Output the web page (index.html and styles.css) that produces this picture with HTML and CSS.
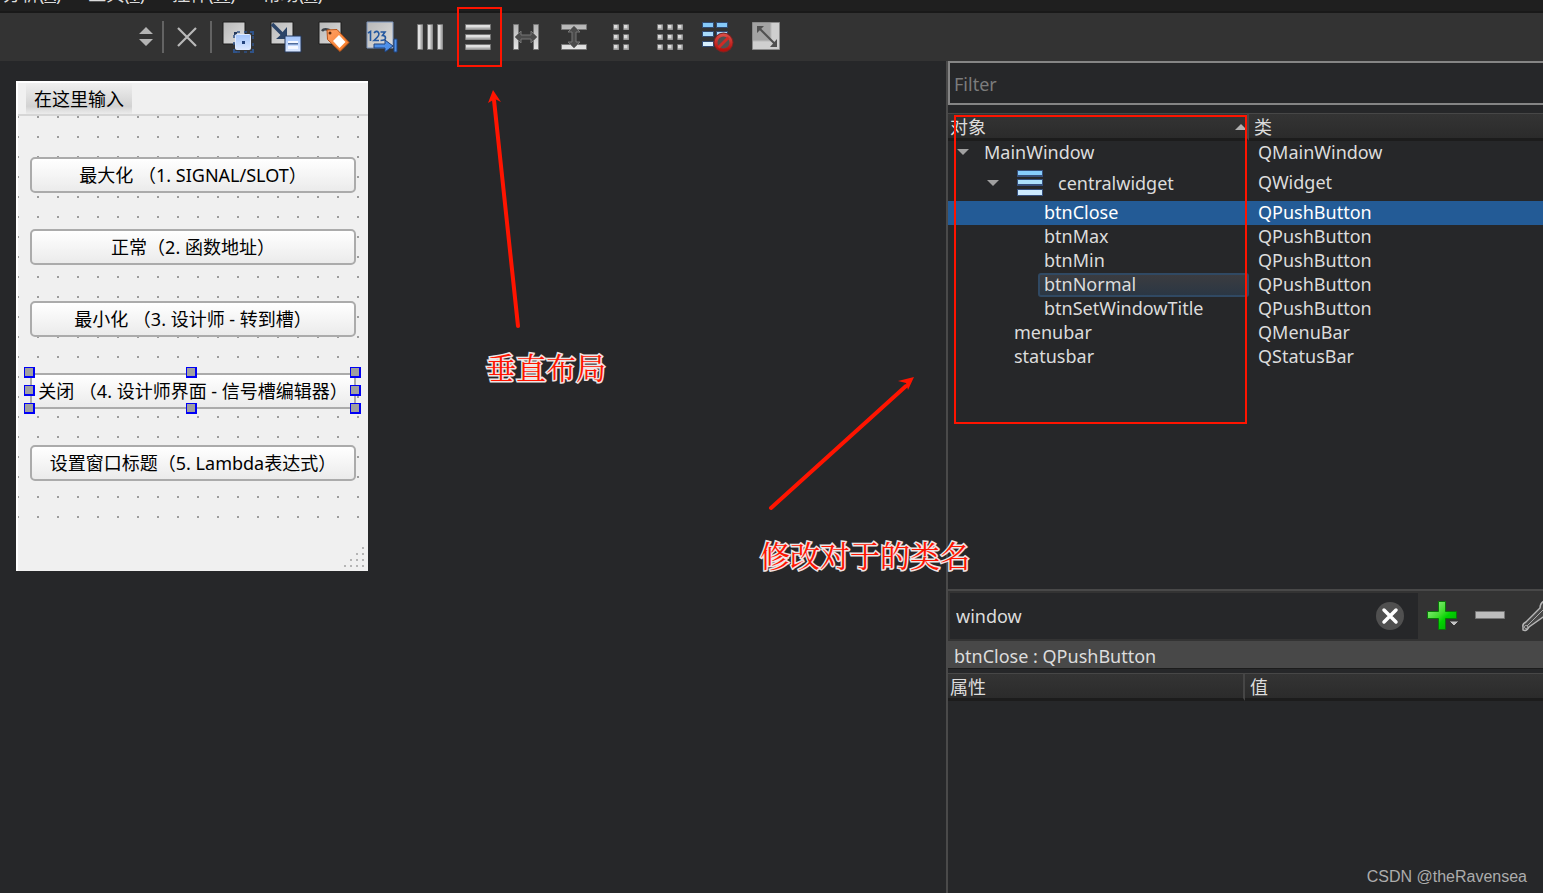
FILE: index.html
```html
<!DOCTYPE html>
<html lang="zh-CN">
<head>
<meta charset="utf-8">
<title>Designer</title>
<link rel="stylesheet" href="styles.css">
</head>
<body>
<svg class="defs" aria-hidden="true">
  <defs>
    <linearGradient id="grey" x1="0" y1="0" x2="0" y2="1"><stop offset="0" stop-color="#b4b4b4"/><stop offset="1" stop-color="#e6e6e6"/></linearGradient>
    <linearGradient id="sheet" x1="0" y1="0" x2="1" y2="1"><stop offset="0" stop-color="#b8b8b8"/><stop offset="1" stop-color="#dedede"/></linearGradient>
    <linearGradient id="blue" x1="0" y1="0" x2="0" y2="1"><stop offset="0" stop-color="#a2c4fb"/><stop offset="1" stop-color="#dbe8ff"/></linearGradient>
    <linearGradient id="green" x1="0" y1="0" x2="1" y2="1"><stop offset="0" stop-color="#a6f09a"/><stop offset=".45" stop-color="#3ddc2c"/><stop offset=".6" stop-color="#00d400"/><stop offset="1" stop-color="#0a9c0a"/></linearGradient>
    <linearGradient id="orange" x1="0" y1="0" x2="1" y2="1"><stop offset="0" stop-color="#ffa36a"/><stop offset="1" stop-color="#f5751d"/></linearGradient>
    <linearGradient id="red" x1="0" y1="0" x2="0" y2="1"><stop offset="0" stop-color="#d94a44"/><stop offset="1" stop-color="#b50f0c"/></linearGradient>
  </defs>
</svg>

<nav class="menubar">
  <button>分析(<u>A</u>)</button>
  <button>工具(<u>T</u>)</button>
  <button>控件(<u>W</u>)</button>
  <button>帮助(<u>H</u>)</button>
</nav>

<div class="toolbar">
  <div class="picker">
    <select aria-label="文件"><option></option></select>
    <svg width="16" height="22" viewBox="0 0 16 22"><path d="M1 8 8 1l7 7zM1 13h14l-7 7z" fill="#b4b4b4"/></svg>
  </div>
  <span class="sep"></span>
  <button class="close" aria-label="关闭文件"><svg width="20" height="20" viewBox="0 0 20 20"><path d="M1 1l18 18M19 1 1 19" stroke="#b9b9b9" stroke-width="2.2"/></svg></button>
  <span class="sep"></span>
  <div class="tools">
    <button aria-label="编辑控件"><svg width="32" height="32" viewBox="0 0 32 32">
      <path d="M1 1h22v22H1z" fill="url(#sheet)" stroke="#1c1c1c"/><path d="M12 11h3v3h-3z" fill="#24395c"/>
      <path d="M12 14v15M15 11h15M31 15v14M15 31h15" stroke="#2f5389" stroke-width="1.5" stroke-dasharray="3 4"/>
      <path d="M28 11h3v3M12 28v3h3M28 31h3v-3" fill="none" stroke="#2f5389" stroke-width="2"/>
      <rect x="13.500" y="13.500" width="15" height="15" rx="1" fill="url(#blue)" stroke="#dce8ff"/><path d="M20 20h3v3h-3z" fill="#24457f"/>
    </svg></button>
    <button aria-label="编辑信号/槽"><svg width="32" height="32" viewBox="0 0 32 32">
      <path d="M1 1h22v22H1z" fill="url(#sheet)" stroke="#1c1c1c"/>
      <path d="M2 3l11 11" stroke="#2b4468" stroke-width="3.500"/><path d="M17 6v12H6l4-3.500L13.500 10z" fill="#2b4468"/>
      <path d="M15 15h16v16H15z" fill="url(#blue)" stroke="#25395c"/><path d="M18 20h10v2H18zm0 5h10v3H18z" fill="#f3f7ff"/><path d="M18 22h10v1.500H18z" fill="#4f6c9c"/>
    </svg></button>
    <button aria-label="编辑伙伴"><svg width="32" height="32" viewBox="0 0 32 32">
      <path d="M1 1h22v22H1z" fill="url(#sheet)" stroke="#1c1c1c"/><path d="M4 10q2-3 7-1l3 3" fill="none" stroke="#3c4148" stroke-width="2.500"/>
      <path d="M9 9l10-.5 12 13-9 9-12.500-12z" fill="url(#orange)" stroke="#b85316"/><path d="M21 14l6.500 7-6 6-6.500-7z" fill="#fff"/><circle cx="12" cy="12" r="1.500" fill="#5b2a0c"/>
    </svg></button>
    <button aria-label="编辑 Tab 顺序"><svg width="32" height="32" viewBox="0 0 32 32">
      <path d="M1 1h26v26H1z" fill="url(#sheet)" stroke="#7d95bd"/>
      <g fill="none" stroke="#2458a0" stroke-width="1.600"><path d="M2 12l2.500-1.500V20M8 12q2.500-3 4.500-.5T8 19.500h5M14.500 11h4.500l-2.500 3.500q3 0 3 2.500t-5 2.500"/></g>
      <path d="M8 23h11v-4l8 6-8 6v-4H8zM28 18h3v13h-3z" fill="#4f90e8" stroke="#1e427c"/>
    </svg></button>
    <button aria-label="水平布局"><svg width="32" height="32" viewBox="0 0 32 32"><path d="M3.500 3.500h5v25h-5zm10 0h5v25h-5zm10 0h5v25h-5z" fill="#e0e0e0" stroke="#777"/><path d="M7.500 4v24M17.500 4v24M27.500 4v24" stroke="#acacac" stroke-width="2"/></svg></button>
    <button class="marked" aria-label="垂直布局"><svg width="32" height="32" viewBox="0 0 32 32"><path d="M3.500 3.500h25v5h-25zm0 10h25v5h-25zm0 10h25v5h-25z" fill="#e0e0e0" stroke="#777"/><path d="M4 7.500h24M4 17.500h24M4 27.500h24" stroke="#acacac" stroke-width="2"/></svg></button>
    <button aria-label="水平分裂布局"><svg width="32" height="32" viewBox="0 0 32 32"><path d="M3.500 3.500h5v25h-5zm20 0h5v25h-5z" fill="url(#grey)" stroke="#777"/><path d="M5 16l6-6v4h10v-4l6 6-6 6v-4H11v4z" fill="#4b4b4b" stroke="#777"/></svg></button>
    <button aria-label="垂直分裂布局"><svg width="32" height="32" viewBox="0 0 32 32"><path d="M3.500 3.500h25v5h-25zm0 20h25v5h-25z" fill="url(#grey)" stroke="#777"/><path d="M16 5l6 6h-4v10h4l-6 6-6-6h4V11h-4z" fill="#4b4b4b" stroke="#777"/></svg></button>
    <button aria-label="表单布局"><svg width="32" height="32" viewBox="0 0 32 32"><path d="M7.500 3.500h5v5h-5zm10 0h5v5h-5zm-10 10h5v5h-5zm10 0h5v5h-5zm-10 10h5v5h-5zm10 0h5v5h-5z" fill="#dcdcdc" stroke="#777"/><path d="M8 8h4V4m6 4h4V4M8 18h4v-4m6 4h4v-4M8 28h4v-4m6 4h4v-4" fill="none" stroke="#a4a4a4" stroke-width="1.500"/></svg></button>
    <button aria-label="栅格布局"><svg width="32" height="32" viewBox="0 0 32 32"><path d="M3.500 3.500h5v5h-5zm10 0h5v5h-5zm10 0h5v5h-5zm-20 10h5v5h-5zm10 0h5v5h-5zm10 0h5v5h-5zm-20 10h5v5h-5zm10 0h5v5h-5zm10 0h5v5h-5z" fill="#dcdcdc" stroke="#777"/><path d="M4 8h4V4m6 4h4V4m6 4h4V4M4 18h4v-4m6 4h4v-4m6 4h4v-4M4 28h4v-4m6 4h4v-4m6 4h4v-4" fill="none" stroke="#a4a4a4" stroke-width="1.500"/></svg></button>
    <button aria-label="打破布局"><svg width="32" height="32" viewBox="0 0 32 32">
      <path d="M.5 1.500h11v5H.5zm14 0h11v5h-11z" fill="#86c9f8" stroke="#304a73"/><path d="M.5 10.500h11v5H.5zm14 0h11v5h-11z" fill="#a9dbfb" stroke="#304a73"/><path d="M.5 20.500h11v5H.5z" fill="#d8effd" stroke="#304a73"/>
      <circle cx="21.500" cy="21.500" r="10" fill="#7a2422"/><circle cx="21.500" cy="21.500" r="7.500" fill="#505050" stroke="url(#red)" stroke-width="3"/><path d="M16.500 26.500l10-10" stroke="#cf2a25" stroke-width="3"/>
    </svg></button>
    <button aria-label="调整大小"><svg width="32" height="32" viewBox="0 0 32 32">
      <path d="M2.500 1.500h27v27h-27z" fill="#cfcfcf" stroke="#8a8a8a"/><path d="M3 2h18v18H3z" fill="#a3a3a3"/><path d="M21 2v18H3" fill="none" stroke="#bcbcbc"/>
      <path d="M9 7l16 16" stroke="#505050" stroke-width="2"/><path d="M7 5h7l-7 7zM27 26h-7l7-8z" fill="#505050"/>
    </svg></button>
  </div>
</div>

<div class="workspace">
  <main class="canvas">
    <section class="form">
      <div class="form-menu"><button>在这里输入</button></div>
      <div class="form-body">
        <button>最大化 （1. SIGNAL/SLOT）</button>
        <button>正常（2. 函数地址）</button>
        <button>最小化 （3. 设计师 - 转到槽）</button>
        <div class="selected">
          <button>关闭 （4. 设计师界面 - 信号槽编辑器）</button>
          <i class="handle top left"></i><i class="handle top mid"></i><i class="handle top right"></i>
          <i class="handle center left"></i><i class="handle center right"></i>
          <i class="handle bottom left"></i><i class="handle bottom mid"></i><i class="handle bottom right"></i>
        </div>
        <button>设置窗口标题（5. Lambda表达式）</button>
      </div>
      <div class="form-status"><svg width="22" height="22" viewBox="0 0 22 22"><path d="M18 0h2v2h-2zM12 6h2v2h-2zm6 0h2v2h-2zM6 12h2v2H6zm6 0h2v2h-2zm6 0h2v2h-2zM0 18h2v2H0zm6 0h2v2H6zm6 0h2v2h-2zm6 0h2v2h-2z" fill="#b5b5b5"/></svg></div>
    </section>
    <svg class="arrow arrow-up" width="40" height="240" viewBox="0 0 40 240"><path d="M34 236 10 10" stroke="#ff1400" stroke-width="4" stroke-linecap="round"/><path d="M9 0l8 12-6-3-7 4z" fill="#ff1400"/></svg>
    <span class="note note-layout">垂直布局</span>
    <svg class="arrow arrow-right" width="150" height="136" viewBox="0 0 150 136"><path d="M3 132 138 10" stroke="#ff1400" stroke-width="4" stroke-linecap="round"/><path d="M146 1l-6 13-2-7-8-2z" fill="#ff1400"/></svg>
    <span class="note note-name">修改对于的类名</span>
  </main>

  <aside class="panel">
    <input class="filter" type="text" placeholder="Filter" aria-label="Filter">
    <div class="objects">
      <table>
        <thead><tr><th><span class="head">对象<svg width="12" height="6" viewBox="0 0 12 6"><path d="M0 6 6 0l6 6z" fill="#b0b0b0"/></svg></span></th><th>类</th></tr></thead>
        <tbody>
          <tr><td class="depth0"><span class="node"><svg width="12" height="6" viewBox="0 0 12 6"><path d="M0 0h12L6 6z" fill="#a0a0a0"/></svg>MainWindow</span></td><td>QMainWindow</td></tr>
          <tr class="tall"><td class="depth1"><span class="node"><svg width="12" height="6" viewBox="0 0 12 6"><path d="M0 0h12L6 6z" fill="#a0a0a0"/></svg><svg class="vbox" width="26" height="26" viewBox="0 0 26 26"><path d="M0 0h26v7H0zm0 9h26v7H0zm0 10h26v7H0z" fill="#37507c"/><path d="M1 1h24v4H1z" fill="#86cdfc"/><path d="M1 10h24v4H1z" fill="#ace0fb"/><path d="M1 20h24v5H1z" fill="#cdebff"/></svg>centralwidget</span></td><td>QWidget</td></tr>
          <tr class="current"><td class="leaf2">btnClose</td><td>QPushButton</td></tr>
          <tr><td class="leaf2">btnMax</td><td>QPushButton</td></tr>
          <tr><td class="leaf2">btnMin</td><td>QPushButton</td></tr>
          <tr><td class="hovered"><span>btnNormal</span></td><td>QPushButton</td></tr>
          <tr><td class="leaf2">btnSetWindowTitle</td><td>QPushButton</td></tr>
          <tr><td class="leaf1">menubar</td><td>QMenuBar</td></tr>
          <tr><td class="leaf1">statusbar</td><td>QStatusBar</td></tr>
        </tbody>
      </table>
      <div class="frame"></div>
    </div>
    <section class="properties">
      <div class="prop-tools">
        <div class="search">
          <input type="text" value="window" aria-label="属性过滤">
          <button aria-label="清除"><svg width="28" height="28" viewBox="0 0 28 28"><circle cx="14" cy="14" r="14" fill="#505050"/><path d="M8 8l12 12M20 8 8 20" stroke="#fff" stroke-width="3.500" stroke-linecap="round"/></svg></button>
        </div>
        <button aria-label="添加"><svg width="32" height="32" viewBox="0 0 32 32"><path d="M12.500 1.500h7v10h11v7h-11v11h-7v-11h-11v-7h11z" fill="url(#green)" stroke="#087808"/><path d="M23 21h10l-5 5z" fill="#c4c4c4" stroke="#333"/></svg></button>
        <button aria-label="删除"><svg width="32" height="32" viewBox="0 0 32 32"><path d="M1.500 11.500h29v7h-29z" fill="#bdbdbd" stroke="#777"/></svg></button>
        <button class="wrench" aria-label="配置"><svg width="32" height="32" viewBox="0 0 32 32"><path d="M1 27q-1-3 3-5L18 8q0-7 8-8l-3 6 4 3 5-4q0 9-8 10L7 27q-3 5-6 3z" fill="#484848" stroke="#b5b5b5" stroke-width="1.500"/><path d="M5 26 21 10" stroke="#aaa"/><circle cx="4" cy="27" r="1.500" fill="#222" stroke="#aaa"/></svg></button>
      </div>
      <div class="object-name">btnClose : QPushButton</div>
      <table class="prop-table"><thead><tr><th>属性</th><th>值</th></tr></thead></table>
    </section>
  </aside>
</div>
<div class="watermark">CSDN @theRavensea</div>
</body>
</html>
```

FILE: styles.css
```css
* { box-sizing: border-box; }

body {
  margin: 0;
  height: 100vh;
  display: flex;
  flex-direction: column;
  overflow: hidden;
  position: relative;
  background: #262729;
  color: #dcdcdc;
  font: 18px/24px "Noto Sans", "Noto Sans CJK SC", sans-serif;
}

button, input, select { font: inherit; color: inherit; }
button { border: 0; padding: 0; background: none; }
svg { display: block; flex: none; }
.defs { position: absolute; width: 0; height: 0; }

.menubar {
  flex: none;
  height: 13px;
  display: flex;
  align-items: flex-end;
  gap: 27px;
  padding: 0 3px 5px;
  overflow: hidden;
  background: #1f1f1f;
  border-bottom: 2px solid #191919;
}
.menubar button { flex: none; }

.toolbar {
  flex: none;
  height: 48px;
  display: flex;
  align-items: center;
  background: #333;
}
.picker { width: 162px; display: flex; align-items: center; padding-right: 8px; }
.picker select { flex: 1; min-width: 0; height: 32px; border: 0; background: none; appearance: none; }
.sep { width: 2px; height: 32px; background: #636363; }
.close { width: 46px; height: 48px; display: grid; place-items: center; }
.tools { display: flex; padding-left: 2px; }
.tools button { width: 48px; height: 48px; display: grid; place-items: center; position: relative; }
.marked::after {
  content: "";
  position: absolute;
  inset: -6px 0 -6px 3px;
  border: 2px solid #ff1400;
}

.workspace { flex: 1; min-height: 0; display: flex; }
.canvas { flex: 1; min-width: 0; padding: 20px 16px; position: relative; }

.form {
  width: 352px;
  display: flex;
  flex-direction: column;
  background: #f0f0f0;
  border: 2px solid #fff;
  border-width: 2px 0 0 2px;
  color: #000;
}
.form-menu { height: 33px; padding-left: 8px; border-bottom: 2px solid #d6d6d6; }
.form-menu button {
  display: block;
  height: 31px;
  padding: 0 8px;
  background: linear-gradient(#efefef, #d2d2d2 75%, #ececec);
}
.form-body {
  display: flex;
  flex-direction: column;
  gap: 36px;
  padding: 41px 12px 50px;
  background: conic-gradient(from 270deg at 2px 2px, #9c9c9c 90deg, transparent 0) -1px 0 / 20px 20px;
}
.form-body button {
  width: 100%;
  height: 36px;
  padding: 0;
  border: 2px solid #ababab;
  border-radius: 5px;
  background: linear-gradient(#fff, #ebebeb);
  white-space: nowrap;
}
.form-status { height: 40px; display: flex; justify-content: flex-end; align-items: flex-end; padding: 0 2px 2px; }

.selected { position: relative; display: flex; }
.handle {
  position: absolute;
  width: 11px;
  height: 11px;
  background: #a0a0a0;
  border: 1px solid #0000f5;
  border-width: 1px 2px 2px 1px;
}
.top { top: -6px; }
.center { top: 12px; }
.bottom { bottom: -5px; }
.left { left: -6px; }
.mid { left: calc(50% - 7px); }
.right { right: -5px; }

.arrow { position: absolute; }
.arrow-up { left: 484px; top: 29px; }
.arrow-right { left: 768px; top: 315px; }
.note {
  position: absolute;
  z-index: 2;
  font: 400 30px/40px "Noto Serif CJK SC", "Noto Sans CJK SC", serif;
  color: #ff1400;
  -webkit-text-stroke: 3px #f0e4e4;
  paint-order: stroke fill;
  white-space: nowrap;
}
.note-layout { left: 486px; top: 285px; }
.note-name { left: 760px; top: 473px; }

.panel {
  flex: 0 0 597px;
  display: flex;
  flex-direction: column;
  border-left: 2px solid #4a4a4a;
}
.filter {
  flex: none;
  height: 44px;
  margin-bottom: 8px;
  padding: 2px 4px 0;
  border: 2px solid #858585;
  border-right: 0;
  background: #262729;
}
.filter::placeholder { color: #7c7c7c; opacity: 1; }

.objects { flex: 1; min-height: 0; position: relative; }
table { width: 100%; border-collapse: separate; border-spacing: 0; table-layout: fixed; text-align: left; }
th, td { padding: 0; height: 24px; font-weight: 400; white-space: nowrap; }
td { padding-bottom: 2px; line-height: 22px; }
th {
  height: 28px;
  padding: 2px 0 0 2px;
  line-height: 22px;
  background: linear-gradient(#343434, #2b2b2b);
  border-top: 1px solid #474747;
  border-bottom: 3px solid #1c1c1c;
}
th:first-child { width: 301px; border-right: 2px solid #464646; }
th:last-child { padding-left: 5px; }
.head { display: flex; align-items: center; justify-content: space-between; }
td:last-child { padding-left: 9px; }
.tall td { height: 36px; }
.node { display: flex; align-items: center; gap: 15px; }
.depth0 { padding-left: 9px; }
.tall .depth1 { padding: 0 0 0 39px; }
.depth1 .node { gap: 18px; padding-bottom: 1px; }
.vbox { margin-right: -3px; }
.leaf1 { padding-left: 66px; }
.leaf2 { padding-left: 96px; }
.current td { background: #235b96; color: #fff; }
.hovered { padding: 0 0 0 90px; }
.hovered span {
  display: block;
  height: 24px;
  padding-left: 4px;
  line-height: 18px;
  border: 2px solid #304963;
  border-radius: 3px;
  background: linear-gradient(#3b3c40, #2b3744);
}
.frame {
  position: absolute;
  left: 6px;
  top: 2px;
  width: 293px;
  height: 309px;
  border: 2px solid #ff1400;
}

.properties { flex: none; height: 304px; border-top: 2px solid #484848; }
.prop-tools { display: flex; align-items: center; height: 50px; background: #333; }
.prop-tools > button { width: 48px; height: 48px; display: grid; place-items: center; }
.prop-tools .wrench { width: 29px; padding-left: 8px; overflow: hidden; place-items: center start; }
.search { flex: 1; height: 46px; margin-left: 2px; display: flex; align-items: center; padding: 0 14px 0 6px; background: #262729; }
.search input { flex: 1; min-width: 0; padding: 0; border: 0; background: none; }
.object-name { height: 28px; margin-bottom: 4px; padding-left: 6px; line-height: 30px; background: #484848; border-bottom: 1px solid #1c1c1c; }
.prop-table th:first-child { width: 297px; }

.watermark {
  position: absolute;
  right: 16px;
  bottom: 6px;
  font: 16px/20px "Liberation Sans", sans-serif;
  color: #acacac;
}
```
